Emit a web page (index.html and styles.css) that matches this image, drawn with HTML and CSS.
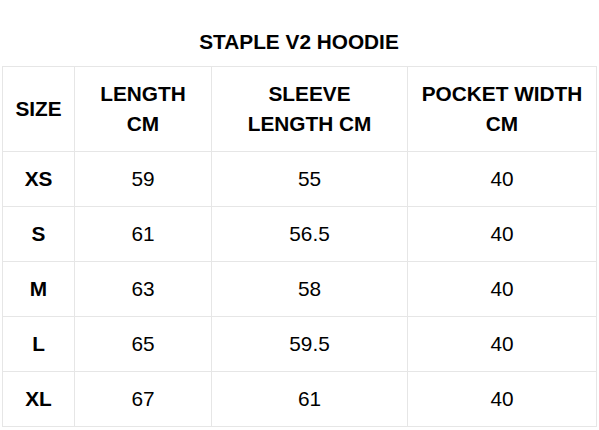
FILE: index.html
```html
<!DOCTYPE html>
<html>
<head>
<meta charset="utf-8">
<link rel="stylesheet" href="styles.css">
</head>
<body>
<div class="wrap">
  <h2 class="title">STAPLE V2 HOODIE</h2>
  <table class="size-table">
    <colgroup>
      <col class="c1"><col class="c2"><col class="c3"><col class="c4">
    </colgroup>
    <thead>
      <tr><th>SIZE</th><th>LENGTH<br>CM</th><th>SLEEVE<br>LENGTH CM</th><th>POCKET WIDTH<br>CM</th></tr>
    </thead>
    <tbody>
      <tr><th>XS</th><td>59</td><td>55</td><td>40</td></tr>
      <tr><th>S</th><td>61</td><td>56.5</td><td>40</td></tr>
      <tr><th>M</th><td>63</td><td>58</td><td>40</td></tr>
      <tr><th>L</th><td>65</td><td>59.5</td><td>40</td></tr>
      <tr><th>XL</th><td>67</td><td>61</td><td>40</td></tr>
    </tbody>
  </table>
</div>
</body>
</html>
```
FILE: styles.css
```css
html, body {
  margin: 0;
  padding: 0;
  background: #fff;
}
body {
  font-family: "Liberation Sans", Arial, sans-serif;
  color: #000;
}
.wrap {
  padding: 27px 3px 0 2px;
}
.title {
  margin: 0 0 9px;
  font-size: 20.8px;
  line-height: 30px;
  font-weight: bold;
  text-align: center;
}
.size-table {
  width: 594px;
  border-collapse: collapse;
  table-layout: fixed;
  font-size: 20.8px;
  line-height: 30px;
}
.c1 { width: 72px; }
.c2 { width: 137px; }
.c3 { width: 196px; }
.c4 { width: 189px; }
.size-table th,
.size-table td {
  border: 1px solid #e6e6e6;
  padding: 12px 4px;
  text-align: center;
  vertical-align: middle;
}
.size-table th {
  font-weight: bold;
}
.size-table td {
  font-weight: normal;
}
```
